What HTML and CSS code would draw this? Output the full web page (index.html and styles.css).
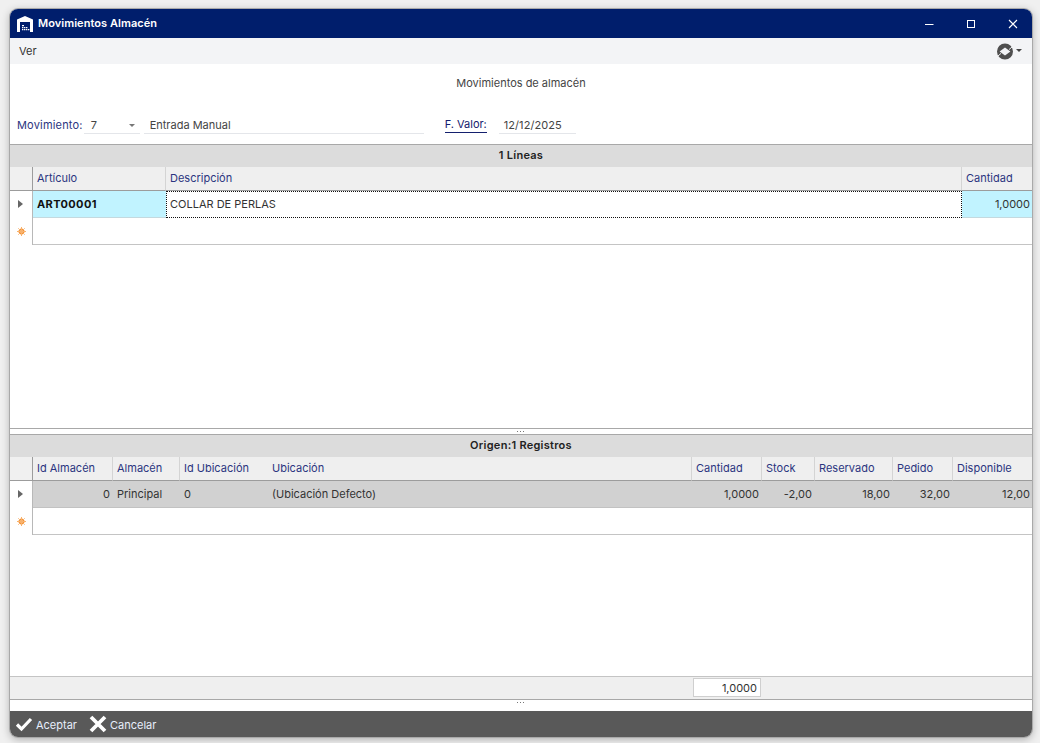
FILE: index.html
```html
<!DOCTYPE html>
<html lang="es">
<head>
<meta charset="utf-8">
<title>Movimientos Almacén</title>
<link rel="stylesheet" href="styles.css">
</head>
<body>
<svg class="defs" width="0" height="0"><defs><g id="new-row"><circle cx="4.5" cy="4.5" r="3" fill="#f59233"/><path d="M4.5 0v9M0 4.5h9M1.3 1.3l6.4 6.4M7.7 1.3 1.3 7.7" stroke="#f7b26e" stroke-width="1"/></g></defs></svg>
<div class="window">
  <header class="titlebar">
    <svg class="app-icon" width="16" height="16" viewBox="0 0 16 16"><path fill="#fff" fill-rule="evenodd" d="M0 3.5 8 0 16 3.5V16H0ZM3 6V16H13V6Z"/><path fill="#fff" d="M5 9h2v1.2H5zM5 11h1.4v1.2H5zM7 11h1.4v1.2H7zM5 13h1.4v1.2H5zM7 13h1.4v1.2H7zM9 13h1.4v1.2H9zM11 13h1.4v1.2H11zM9 11h1.4v1.2H9z"/></svg>
    <span class="title">Movimientos Almacén</span>
    <div class="win-buttons">
      <svg width="10" height="10" viewBox="0 0 10 10"><path d="M1 5.5h8.5" stroke="#fff" stroke-width="1"/></svg>
      <svg width="10" height="10" viewBox="0 0 10 10"><rect x="1.5" y="1.5" width="7" height="7" fill="none" stroke="#fff"/></svg>
      <svg width="10" height="10" viewBox="0 0 10 10"><path d="M1 1l8 8M9 1l-8 8" stroke="#fff" stroke-width="1.1"/></svg>
    </div>
  </header>
  <nav class="menubar">
    <span>Ver</span>
    <div class="menu-tool">
      <svg width="16" height="17" viewBox="0 0 16 17"><path fill="#4f4f4f" fill-rule="evenodd" d="M8 .5a8 8 0 1 1 0 16 8 8 0 0 1 0-16ZM8 4.4 2.6 8.5 8 12.6l5.4-4.1Z"/><path d="M15 4 12 6.6M1 13 4 10.4" stroke="#f3f4f6" stroke-width="1"/></svg>
      <span class="caret"></span>
    </div>
  </nav>
  <div class="form-title">Movimientos de almacén</div>
  <div class="form-row">
    <label class="lbl">Movimiento:</label>
    <div class="field combo"><span>7</span><span class="caret light"></span></div>
    <div class="field desc">Entrada Manual</div>
    <label class="lbl link">F. Valor:</label>
    <div class="field date">12/12/2025</div>
  </div>
  <section class="pane pane-top">
    <h2 class="section-head">1 Líneas</h2>
    <div class="grid grid-a">
      <div class="corner"></div><div class="th">Artículo</div><div class="th">Descripción</div><div class="th">Cantidad</div>
      <div class="ind"><span class="arrow"></span></div><div class="td sel strong">ART00001</div><div class="td focus">COLLAR DE PERLAS</div><div class="td sel num">1,0000</div>
      <div class="ind"><svg class="star" width="9" height="9" viewBox="0 0 9 9"><use href="#new-row"/></svg></div><div class="td new"></div><div class="td new"></div><div class="td new"></div>
    </div>
  </section>
  <div class="splitter"><span class="dots"></span></div>
  <section class="pane pane-bottom">
    <h2 class="section-head">Origen:1 Registros</h2>
    <div class="grid grid-b">
      <div class="corner"></div><div class="th">Id Almacén</div><div class="th">Almacén</div><div class="th">Id Ubicación</div><div class="th">Ubicación</div><div class="th">Cantidad</div><div class="th">Stock</div><div class="th">Reservado</div><div class="th">Pedido</div><div class="th">Disponible</div>
      <div class="ind"><span class="arrow"></span></div><div class="td cur num">0</div><div class="td cur">Principal</div><div class="td cur">0</div><div class="td cur">(Ubicación Defecto)</div><div class="td cur num">1,0000</div><div class="td cur num">-2,00</div><div class="td cur num">18,00</div><div class="td cur num">32,00</div><div class="td cur num end">12,00</div>
      <div class="ind"><svg class="star" width="9" height="9" viewBox="0 0 9 9"><use href="#new-row"/></svg></div><div class="td new"></div><div class="td new"></div><div class="td new"></div><div class="td new"></div><div class="td new"></div><div class="td new"></div><div class="td new"></div><div class="td new"></div><div class="td new"></div>
    </div>
    <div class="spacer"></div>
    <div class="totals"><div class="total-box">1,0000</div></div>
  </section>
  <div class="splitter bottom"><span class="dots"></span></div>
  <footer class="toolbar">
    <button class="tool" type="button">
      <svg width="18" height="16" viewBox="0 0 18 16"><path d="M2 8.5 6.5 13 16 3" fill="none" stroke="#fff" stroke-width="3.2"/></svg>
      <span>Aceptar</span>
    </button>
    <button class="tool" type="button">
      <svg width="18" height="18" viewBox="0 0 18 18"><path d="M2 2l14 14M16 2 2 16" stroke="#fff" stroke-width="3.8"/></svg>
      <span>Cancelar</span>
    </button>
  </footer>
</div>
</body>
</html>
```
FILE: styles.css
```css
* { box-sizing: border-box; }
html, body { height: 100%; margin: 0; }
body {
  background: #f0f0f0;
  padding: 9px 8px 6px 10px;
  font: 11px/14px Inter, "Liberation Sans", sans-serif;
  color: #333;
  overflow: hidden;
}
.defs { display: block; }
.window {
  height: 728px;
  display: flex;
  flex-direction: column;
  background: #fff;
  border-radius: 8px;
  overflow: hidden;
  box-shadow: 0 0 0 1px #a9a9a9, 0 2px 8px rgba(0,0,0,.3);
}
.titlebar {
  height: 29px;
  flex: none;
  background: #001e6c;
  color: #fff;
  display: flex;
  align-items: center;
  padding-left: 7px;
}
.app-icon { margin-right: 5px; }
.title { font-weight: 600; font-size: 11px; letter-spacing: .06px; padding-bottom: 2px; }
.win-buttons {
  margin-left: auto;
  display: flex;
  gap: 32px;
  padding-right: 14px;
}
.menubar {
  height: 26px;
  flex: none;
  background: #f3f4f6;
  display: flex;
  align-items: center;
  justify-content: space-between;
  padding: 0 10px 0 9px;
}
.menu-tool { display: flex; align-items: center; gap: 3px; }
.caret {
  width: 0; height: 0;
  border-left: 3.5px solid transparent;
  border-right: 3.5px solid transparent;
  border-top: 3.5px solid #444;
  margin-bottom: 1px;
}
.caret.light { border-top-color: #777; margin: 0; }
.form-title {
  flex: none;
  height: 39px;
  padding-top: 12px;
  text-align: center;
  color: #444;
}
.form-row {
  flex: none;
  height: 41px;
  display: flex;
  align-items: flex-start;
  padding: 15px 0 0 7px;
  color: #444;
}
.lbl { color: #2b3580; line-height: 14px; letter-spacing: .18px; }
.lbl.link { color: #14206e; border-bottom: 1px solid #14206e; line-height: 13px; height: 15px; margin-left: 21px; letter-spacing: 0; }
.field { height: 16px; border-bottom: 1px solid #e4e6ea; line-height: 14px; }
.combo {
  width: 56px;
  margin-left: 1px;
  padding: 0 5px 1px 7px;
  display: flex;
  justify-content: space-between;
  align-items: center;
}
.desc { width: 280px; margin-left: 4px; padding-left: 6px; }
.date { width: 77px; margin-left: 12px; padding-left: 5px; letter-spacing: .06px; }
.pane { display: flex; flex-direction: column; }
.pane-top { height: 284px; flex: none; }
.pane-bottom { flex: 1; min-height: 0; }
.section-head {
  margin: 0;
  flex: none;
  height: 23px;
  background: #dcdcdc;
  border-top: 1px solid #a8a8a8;
  font: 600 11px/21px Inter, "Liberation Sans", sans-serif;
  letter-spacing: .27px;
  text-align: center;
  color: #222;
}
.grid { display: grid; flex: none; }
.grid-a {
  grid-template-columns: 23px 133px 796px 70px;
  grid-template-rows: 24px 27px 27px;
}
.grid-b {
  grid-template-columns: 23px 80px 67px 88px 424px 70px 53px 78px 60px 79px;
  grid-template-rows: 24px 27px 27px;
}
.corner { background: #f0f0f0; border-bottom: 1px solid #9c9c9c; border-right: 1px solid #9c9c9c; }
.th {
  background: #efefef;
  border-right: 1px solid #d4d4d4;
  border-bottom: 1px solid #9c9c9c;
  color: #2b3580;
  padding: 4px 4px 0;
  white-space: nowrap;
  overflow: hidden;
}
.th:nth-child(4), .grid-b .th:nth-child(10) { border-right: 0; }
.ind {
  border-right: 1px solid #b8b8b8;
  display: flex;
  align-items: center;
  padding-left: 8px;
}
.arrow {
  width: 0; height: 0;
  border-top: 4px solid transparent;
  border-bottom: 4px solid transparent;
  border-left: 5px solid #666;
  margin-bottom: 1px;
}
.star { margin-left: -1px; }
.td {
  padding: 6px 4px 0;
  border-bottom: 1px solid #cfcfcf;
  color: #333;
  white-space: nowrap;
  overflow: hidden;
}
.num { text-align: right; padding-right: 3px; }
.sel { background: #c1f3ff; border-bottom-color: #c4d9df; }
.sel.num, .cur.end { padding-right: 2px; }
.strong { font-weight: 700; color: #111; letter-spacing: .37px; }
.focus { border: 1px dotted #111; padding: 5px 3px 0; }
.new { background: #fff; border-bottom: 1px solid #c4c4c4; }
.cur { background: #d1d1d1; border-bottom-color: #c2c2c2; }
.splitter {
  flex: none;
  height: 6px;
  border-top: 1px solid #a8a8a8;
  display: flex;
  justify-content: center;
  align-items: center;
  background: #fff;
}
.splitter.bottom { height: 12px; padding-bottom: 6px; }
.dots { width: 9px; height: 1px; background-image: linear-gradient(90deg, #777 1px, transparent 1px); background-size: 3px 1px; }
.spacer { flex: 1; }
.totals {
  flex: none;
  height: 23px;
  background: #efefef;
  border-top: 1px solid #c4c4c4;
  padding: 1px 0 0 683px;
}
.total-box {
  width: 68px;
  height: 19px;
  background: #fff;
  border: 1px solid #cfcfcf;
  text-align: right;
  padding: 2px 3px 0 0;
  color: #333;
}
.toolbar {
  flex: none;
  height: 26px;
  background: #595959;
  display: flex;
  align-items: center;
  padding-left: 5px;
  gap: 12px;
}
.tool {
  display: flex;
  align-items: center;
  gap: 3px;
  background: none;
  border: 0;
  padding: 0;
  color: #e8eefc;
  font: 11px/14px Inter, "Liberation Sans", sans-serif;
}
.tool span { padding-top: 2px; }
```
